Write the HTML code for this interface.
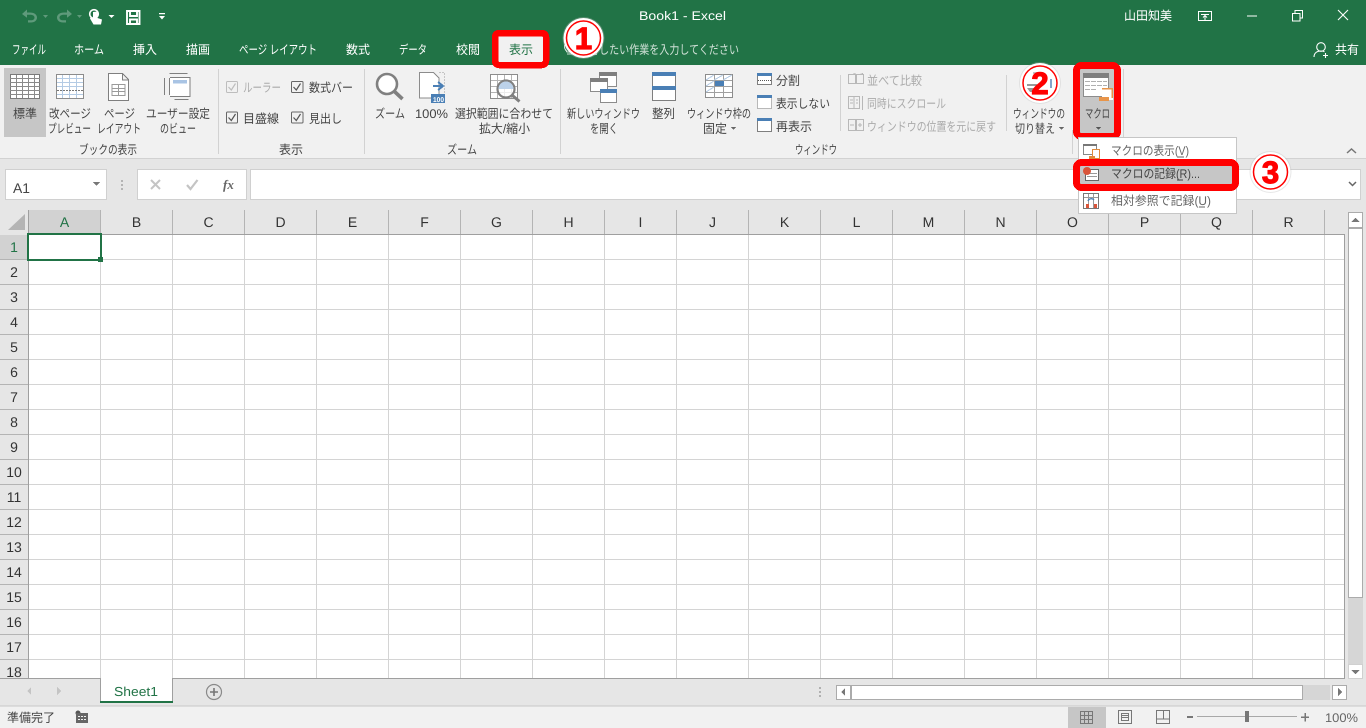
<!DOCTYPE html>
<html lang="ja"><head><meta charset="utf-8"><title>Book1 - Excel</title>
<style>
html,body{margin:0;padding:0;width:1366px;height:728px;overflow:hidden;background:#fff}
svg{display:block}
text{font-family:"Liberation Sans","Noto Sans CJK JP",sans-serif;font-size:12.5px;fill:#444;}
.w{fill:#fff}.g{fill:#ababab}
.h{font-size:14px;fill:#333;text-anchor:middle}
.n{font-size:14px;fill:#333;text-anchor:middle}
.c{font-family:"Liberation Sans",sans-serif;font-weight:bold;font-size:31px;fill:#f00;text-anchor:middle;stroke:#f00;stroke-width:1.2px}
</style></head><body>
<svg width="1366" height="728" viewBox="0 0 1366 728" xmlns="http://www.w3.org/2000/svg" shape-rendering="crispEdges" text-rendering="geometricPrecision">
<!-- chrome backgrounds -->
<rect width="1366" height="65" fill="#217346"/>
<rect y="65" width="1366" height="93" fill="#f1f1f1"/>
<rect y="158" width="1366" height="52" fill="#e6e6e6"/>
<rect y="158" width="1366" height="1" fill="#d2d2d2"/>
<!-- title -->
<text class="w" x="639" y="20" textLength="87" lengthAdjust="spacingAndGlyphs">Book1  -  Excel</text>
<text class="w" x="1124" y="20" textLength="48" lengthAdjust="spacingAndGlyphs">山田知美</text>
<g shape-rendering="geometricPrecision">
<!-- QAT -->
<path d="M22 14l5-4.500v3h3c4 0 7 2 7 5s-2.500 5-6 5h-3v-2.200h3c2.300 0 3.500-1.200 3.500-2.800s-1.500-2.800-4.500-2.800h-3v3z" fill="#5f9a7b"/>
<path d="M43 15h5l-2.500 3z" fill="#5f9a7b"/>
<path d="M72 14l-5-4.500v3h-3c-4 0-7 2-7 5s2.500 5 6 5h3v-2.200h-3c-2.300 0-3.500-1.200-3.500-2.800s1.500-2.800 4.500-2.800h3v3z" fill="#5f9a7b"/>
<path d="M77 15h5l-2.500 3z" fill="#5f9a7b"/>
<path d="M93 12v6l-2.500-.5-.5 1 3.500 6h7.500l1-5-4.500-1.500v-6.500z" fill="#fff"/>
<circle cx="94" cy="14" r="4.300" fill="none" stroke="#fff" stroke-width="1.600"/>
<path d="M108.500 15h6l-3 3z" fill="#fff"/>
<path d="M127 11h12.500v13h-12.500z M130 11v5h7v-5 M130 24v-4.500h7v4.500" fill="none" stroke="#fff" stroke-width="1.900"/>
<path d="M159 13h6v1.200h-6z M159 16h6l-3 3.500z" fill="#fff"/>
<!-- window controls -->
<path d="M1198.500 11.500h13v9h-13z M1201 14.500h8 M1205 20v-4 M1203 17.500l2-2 2 2" fill="none" stroke="#fff"/>
<path d="M1247 16h10" stroke="#fff" fill="none"/>
<path d="M1292.500 13.500h7.500v7.500h-7.500z M1295 13v-2.500h7.500v7.500h-2.500" fill="none" stroke="#fff"/>
<path d="M1338 10l10 10M1348 10l-10 10" stroke="#fff" stroke-width="1.100" fill="none"/>
<!-- share person -->
<circle cx="1321" cy="47" r="4.300" fill="none" stroke="#fff" stroke-width="1.100"/>
<path d="M1314 57c0-4 3-6 7-6 1.500 0 2.500.3 3.500.8M1325.500 53v5M1323 55.500h5" fill="none" stroke="#fff" stroke-width="1.100"/>
</g>
<!-- tabs -->
<text class="w" x="12" y="54" textLength="34" lengthAdjust="spacingAndGlyphs">ファイル</text>
<text class="w" x="74" y="54" textLength="30" lengthAdjust="spacingAndGlyphs">ホーム</text>
<text class="w" x="133" y="54" textLength="24" lengthAdjust="spacingAndGlyphs">挿入</text>
<text class="w" x="186" y="54" textLength="24" lengthAdjust="spacingAndGlyphs">描画</text>
<text class="w" x="239" y="54" textLength="78" lengthAdjust="spacingAndGlyphs">ページ レイアウト</text>
<text class="w" x="346" y="54" textLength="24" lengthAdjust="spacingAndGlyphs">数式</text>
<text class="w" x="399" y="54" textLength="28" lengthAdjust="spacingAndGlyphs">データ</text>
<text class="w" x="456" y="54" textLength="24" lengthAdjust="spacingAndGlyphs">校閲</text>
<text style="fill:#cfe0d6" x="579" y="54" textLength="160" lengthAdjust="spacingAndGlyphs">実行したい作業を入力してください</text>
<path d="M565 49a5 5 0 1 1 9 0l-2 3h-5zM567 54h5" fill="none" stroke="#cfe0d6"/>
<text class="w" x="1335" y="54" textLength="24" lengthAdjust="spacingAndGlyphs">共有</text>
<!-- active tab -->
<rect x="497" y="35" width="47" height="30" fill="#f1f1f1"/>
<rect x="495" y="33" width="51" height="32" rx="4" fill="none" stroke="#f00" stroke-width="6.500"/>
<text style="fill:#217346" x="509" y="54" textLength="24" lengthAdjust="spacingAndGlyphs">表示</text>
<!-- ribbon separators -->
<path d="M218.500 69v85M364.500 69v85M560.500 69v85M840.500 75v56M1006.500 75v56M1072.500 130v24M1123.500 69v85" stroke="#d2d2d2" fill="none"/>
<!-- ribbon buttons -->
<rect x="4" y="68" width="42" height="69" fill="#c6c6c6"/>
<!-- 標準 icon -->
<g fill="none">
<rect x="10.500" y="74.500" width="29" height="24" fill="#fff" stroke="#7a7a7a"/>
<path d="M10 78.500h30M10 82.500h30M10 86.500h30M10 90.500h30M10 94.500h30M16.500 75v23M22.500 75v23M28.500 75v23M34.500 75v23" stroke="#8a8a8a"/>
<!-- 改ページ -->
<rect x="56.500" y="74.500" width="27" height="24" fill="#fff" stroke="#8c8c8c"/>
<path d="M57 78.500h26M57 82.500h26M57 86.500h26M57 94.500h26M62.500 75v23M69.500 75v23M76.500 75v23" stroke="#b4cbe4"/>
<path d="M57 90.500h26" stroke="#777" stroke-dasharray="2 1"/>
<!-- ページ -->
<path d="M108.500 73.500h14l6 6v21h-20z M122.500 74v6h6" fill="#fff" stroke="#7f7f7f"/>
<path d="M112 84.500h13v11h-13z M112 88.500h13M112 91.500h13M118.500 84v11" stroke="#9a9a9a"/>
<!-- ユーザー設定 -->
<path d="M169.500 73.500h18M174.500 99.500h14M164.500 78v17M169.500 78v17" stroke="#7f7f7f"/>
<path d="M170 77.500h20v19h-20" fill="#fff" stroke="#7f7f7f"/>
<rect x="173" y="80" width="14" height="3.500" fill="#a9c4e4"/>
<!-- 100% -->
<path d="M419.500 72.500h14l5.500 5.500v20h-19.500z" fill="#fff" stroke="#8c8c8c"/>
<path d="M439.500 72.500h5v20" stroke="#999" stroke-dasharray="1 2"/>
<path d="M433 86h9M438 82l5 4-5 4" stroke="#4a7fb5" stroke-width="2"/>
<rect x="431" y="94" width="14" height="9" fill="#4a7fb5"/>
<!-- 選択範囲 -->
<rect x="490.500" y="74.500" width="27" height="24" fill="#fff" stroke="#8c8c8c"/>
<path d="M491 80.500h26M491 86.500h26M491 92.500h26M497.500 75v23M504.500 75v23M511.500 75v23" stroke="#b4b4b4"/>
<!-- new window -->
<rect x="599.500" y="72.500" width="17" height="14" fill="#fff" stroke="#8c8c8c"/><rect x="599" y="72" width="18" height="4" fill="#7f7f7f"/>
<rect x="590.500" y="78.500" width="17" height="13" fill="#fff" stroke="#8c8c8c"/><rect x="590" y="78" width="18" height="4" fill="#7f7f7f"/>
<rect x="600.500" y="89.500" width="16" height="13" fill="#fff" stroke="#8c8c8c"/><rect x="600" y="89" width="17" height="4" fill="#4a7fb5"/>
<!-- 整列 -->
<rect x="652.500" y="72.500" width="23" height="28" fill="#fff" stroke="#7f7f7f"/>
<rect x="652" y="72" width="24" height="4" fill="#4a7fb5"/><rect x="652" y="86" width="24" height="4" fill="#4a7fb5"/>
<!-- 枠の固定 -->
<rect x="705.500" y="74.500" width="27" height="23" fill="#fff" stroke="#8c8c8c"/>
<path d="M706 80.500h26M706 86.500h26M706 92.500h26M714.500 75v23M723.500 75v23" stroke="#a0a0a0"/>
<path d="M706 80l8-5M706 86l8-5M706 92l8-5M714 80l9-5M723 80l9-5" stroke="#b4cbe4"/>
<rect x="715" y="81" width="9" height="5" fill="#4a7fb5"/>
<!-- 分割 etc -->
<rect x="757.500" y="73.500" width="14" height="11" fill="#fff" stroke="#7f7f7f"/><rect x="757" y="73" width="15" height="3" fill="#4a7fb5"/>
<path d="M758 80.500h14" stroke="#555" stroke-dasharray="1 1"/>
<rect x="757.500" y="95.500" width="14" height="13" fill="#fff" stroke="#777" stroke-dasharray="1 1"/><rect x="757" y="95" width="15" height="3" fill="#4a7fb5"/>
<rect x="757.500" y="118.500" width="14" height="13" fill="#fff" stroke="#7f7f7f"/><rect x="757" y="118" width="15" height="3" fill="#4a7fb5"/>
<!-- disabled -->
<path d="M848.500 74.500h7v9h-7zM856.500 74.500h7v9h-7zM852.500 74.500l3-1M860 74.500l3-1" stroke="#b8b8b8"/>
<path d="M848.500 96.500h11v12h-11zM854 97v11M850 100h3M850 103h3M856 100h2M856 103h2M862.500 96v14" stroke="#b8b8b8"/>
<path d="M848.500 119.500h7v11h-7zM856.500 119.500h7v11h-7zM850 125h4M858 125h4M860 123v4" stroke="#b8b8b8"/>
</g>
<g shape-rendering="geometricPrecision" fill="none">
<!-- magnifiers -->
<circle cx="387" cy="84" r="10" fill="#fff" stroke="#808080" stroke-width="2.600"/>
<path d="M394.500 91.500l8 7.500" stroke="#808080" stroke-width="3.600"/>
<circle cx="506" cy="89" r="8.500" fill="#fff" fill-opacity=".75" stroke="#808080" stroke-width="2.200"/>
<path d="M498.500 89a7.500 7.500 0 0 1 15 0z" fill="#bcd2ea"/>
<path d="M512.500 95.500l7 6" stroke="#808080" stroke-width="3"/>
<!-- checks -->
<rect x="226.500" y="81.500" width="11" height="11" rx="1" stroke="#bdbdbd"/>
<path d="M228.500 87l2.800 3 4.200-6.500" stroke="#bdbdbd" stroke-width="1.200"/>
<rect x="291.500" y="81.500" width="11.500" height="11" rx="1" stroke="#666"/>
<path d="M293.500 87l2.800 3 4.200-6.500" stroke="#555" stroke-width="1.200"/>
<rect x="226.500" y="112" width="11" height="11" rx="1" stroke="#666"/>
<path d="M228.500 117.500l2.800 3 4.200-6.500" stroke="#555" stroke-width="1.200"/>
<rect x="291.500" y="112" width="11.500" height="11" rx="1" stroke="#666"/>
<path d="M293.500 117.500l2.800 3 4.200-6.500" stroke="#555" stroke-width="1.200"/>
</g>
<text x="433" y="102" textLength="11" lengthAdjust="spacingAndGlyphs" style="font-size:7px;font-weight:bold;fill:#fff">100</text>
<!-- ribbon text -->
<text x="13" y="118" textLength="24" lengthAdjust="spacingAndGlyphs">標準</text>
<text x="49" y="118" textLength="42" lengthAdjust="spacingAndGlyphs">改ページ</text>
<text x="48" y="133" textLength="43" lengthAdjust="spacingAndGlyphs">プレビュー</text>
<text x="104" y="118" textLength="31" lengthAdjust="spacingAndGlyphs">ページ</text>
<text x="97" y="133" textLength="44" lengthAdjust="spacingAndGlyphs">レイアウト</text>
<text x="146" y="118" textLength="64" lengthAdjust="spacingAndGlyphs">ユーザー設定</text>
<text x="160" y="133" textLength="36" lengthAdjust="spacingAndGlyphs">のビュー</text>
<text x="79" y="154" textLength="58" lengthAdjust="spacingAndGlyphs">ブックの表示</text>
<text class="g" x="243" y="92" textLength="38" lengthAdjust="spacingAndGlyphs">ルーラー</text>
<text x="309" y="92" textLength="44" lengthAdjust="spacingAndGlyphs">数式バー</text>
<text x="243" y="123" textLength="36" lengthAdjust="spacingAndGlyphs">目盛線</text>
<text x="309" y="123" textLength="33" lengthAdjust="spacingAndGlyphs">見出し</text>
<text x="279" y="154" textLength="24" lengthAdjust="spacingAndGlyphs">表示</text>
<text x="375" y="118" textLength="30" lengthAdjust="spacingAndGlyphs">ズーム</text>
<text x="415" y="118" textLength="33" lengthAdjust="spacingAndGlyphs">100%</text>
<text x="455" y="118" textLength="98" lengthAdjust="spacingAndGlyphs">選択範囲に合わせて</text>
<text x="479" y="133" textLength="51" lengthAdjust="spacingAndGlyphs">拡大/縮小</text>
<text x="447" y="154" textLength="30" lengthAdjust="spacingAndGlyphs">ズーム</text>
<text x="567" y="118" textLength="73" lengthAdjust="spacingAndGlyphs">新しいウィンドウ</text>
<text x="590" y="133" textLength="28" lengthAdjust="spacingAndGlyphs">を開く</text>
<text x="652" y="118" textLength="23" lengthAdjust="spacingAndGlyphs">整列</text>
<text x="687" y="118" textLength="64" lengthAdjust="spacingAndGlyphs">ウィンドウ枠の</text>
<text x="703" y="133" textLength="24" lengthAdjust="spacingAndGlyphs">固定</text>
<path d="M731 127h5l-2.500 3z" fill="#666"/>
<text x="776" y="85" textLength="24" lengthAdjust="spacingAndGlyphs">分割</text>
<text x="776" y="108" textLength="54" lengthAdjust="spacingAndGlyphs">表示しない</text>
<text x="776" y="131" textLength="36" lengthAdjust="spacingAndGlyphs">再表示</text>
<text class="g" x="867" y="85" textLength="55" lengthAdjust="spacingAndGlyphs">並べて比較</text>
<text class="g" x="867" y="108" textLength="79" lengthAdjust="spacingAndGlyphs">同時にスクロール</text>
<text class="g" x="867" y="131" textLength="129" lengthAdjust="spacingAndGlyphs">ウィンドウの位置を元に戻す</text>
<text x="795" y="154" textLength="42" lengthAdjust="spacingAndGlyphs">ウィンドウ</text>
<text x="1013" y="118" textLength="52" lengthAdjust="spacingAndGlyphs">ウィンドウの</text>
<text x="1015" y="133" textLength="40" lengthAdjust="spacingAndGlyphs">切り替え</text>
<path d="M1059 127h5l-2.500 3z" fill="#666"/>
<!-- collapse chevron -->
<path d="M1347 153l4.500-4 4.500 4" fill="none" stroke="#777" stroke-width="1.500" shape-rendering="geometricPrecision"/>
<!-- macro button -->
<rect x="1080" y="69" width="34" height="64" fill="#c6c6c6"/>
<rect x="1083.500" y="73.500" width="25" height="23" fill="#fff" stroke="#8c8c8c"/>
<rect x="1083" y="73" width="26" height="5" fill="#7f7f7f"/>
<path d="M1085 81.500h22M1085 85.500h22M1085 89.500h12" stroke="#b0b0b0" stroke-dasharray="5 1"/>
<rect x="1102" y="88" width="11" height="12" fill="#fff"/>
<path d="M1102 88h11v1.500h-11z M1111.500 88h1.500v10h-1.500z" fill="#e8954a"/>
<rect x="1099" y="97" width="10" height="4" fill="#e8954a"/>
<text x="1085" y="118" textLength="25" lengthAdjust="spacingAndGlyphs">マクロ</text>
<path d="M1096 127h5l-2.500 3z" fill="#555"/>
<rect x="1076.500" y="65.500" width="41" height="71" rx="5" fill="none" stroke="#f00" stroke-width="7"/>
<!-- formula bar -->
<rect x="5.500" y="169.500" width="101" height="30" fill="#fff" stroke="#d0d0d0"/>
<text x="13" y="193" style="font-size:14px" textLength="17" lengthAdjust="spacingAndGlyphs">A1</text>
<path d="M93 182h7l-3.500 4z" fill="#777"/>
<path d="M121 180h2v2h-2zM121 184h2v2h-2zM121 188h2v2h-2z" fill="#b4b4b4"/>
<rect x="137.500" y="169.500" width="109" height="30" fill="#fff" stroke="#d0d0d0"/>
<path d="M151 180l9 9M160 180l-9 9" stroke="#c4c4c4" stroke-width="2" fill="none" shape-rendering="geometricPrecision"/>
<path d="M187 185l3.500 4 7-9" stroke="#c4c4c4" stroke-width="2.200" fill="none" shape-rendering="geometricPrecision"/>
<text x="223" y="189" style="font-family:'Liberation Serif',serif;font-style:italic;font-weight:bold;font-size:13px;fill:#666">fx</text>
<rect x="250.500" y="169.500" width="1110" height="30" fill="#fff" stroke="#d0d0d0"/>
<path d="M1349 182l3.500 3.500 3.500-3.500" fill="none" stroke="#666" stroke-width="1.500" shape-rendering="geometricPrecision"/>
<!-- sheet -->
<rect y="210" width="1345" height="25" fill="#e6e6e6"/>
<rect y="235" width="28" height="443" fill="#e6e6e6"/>
<rect x="1345" y="210" width="21" height="496" fill="#e6e6e6"/>
<rect x="28" y="235" width="1316" height="443" fill="#fff"/>
<path d="M8 230L25 214V230Z" fill="#b4b4b4" shape-rendering="geometricPrecision"/>
<rect x="28" y="210" width="72" height="24" fill="#d2d2d2"/>
<rect y="235" width="28" height="25" fill="#d2d2d2"/>
<!-- grid -->
<path fill="none" stroke="#d4d4d4" d="M100.500 235V678M172.500 235V678M244.500 235V678M316.500 235V678M388.500 235V678M460.500 235V678M532.500 235V678M604.500 235V678M676.500 235V678M748.500 235V678M820.500 235V678M892.500 235V678M964.500 235V678M1036.500 235V678M1108.500 235V678M1180.500 235V678M1252.500 235V678M1324.500 235V678
M28 259.500H1344M28 284.500H1344M28 309.500H1344M28 334.500H1344M28 359.500H1344M28 384.500H1344M28 409.500H1344M28 434.500H1344M28 459.500H1344M28 484.500H1344M28 509.500H1344M28 534.500H1344M28 559.500H1344M28 584.500H1344M28 609.500H1344M28 634.500H1344M28 659.500H1344"/>
<path fill="none" stroke="#b4b4b4" d="M100.500 210V234M172.500 210V234M244.500 210V234M316.500 210V234M388.500 210V234M460.500 210V234M532.500 210V234M604.500 210V234M676.500 210V234M748.500 210V234M820.500 210V234M892.500 210V234M964.500 210V234M1036.500 210V234M1108.500 210V234M1180.500 210V234M1252.500 210V234M1324.500 210V234"/>
<path fill="none" stroke="#b4b4b4" d="M0 259.500H28M0 284.500H28M0 309.500H28M0 334.500H28M0 359.500H28M0 384.500H28M0 409.500H28M0 434.500H28M0 459.500H28M0 484.500H28M0 509.500H28M0 534.500H28M0 559.500H28M0 584.500H28M0 609.500H28M0 634.500H28M0 659.500H28"/>
<path fill="none" stroke="#9f9f9f" d="M28.500 210V678M28 234.500H1345M1344.500 234V678M0 678.500H1345"/>
<!-- headers -->
<text class="h" style="fill:#217346" x="64.500" y="227">A</text><text class="h" x="136.500" y="227">B</text><text class="h" x="208.500" y="227">C</text><text class="h" x="280.500" y="227">D</text><text class="h" x="352.500" y="227">E</text><text class="h" x="424.500" y="227">F</text><text class="h" x="496.500" y="227">G</text><text class="h" x="568.500" y="227">H</text><text class="h" x="640.500" y="227">I</text><text class="h" x="712.500" y="227">J</text><text class="h" x="784.500" y="227">K</text><text class="h" x="856.500" y="227">L</text><text class="h" x="928.500" y="227">M</text><text class="h" x="1000.500" y="227">N</text><text class="h" x="1072.500" y="227">O</text><text class="h" x="1144.500" y="227">P</text><text class="h" x="1216.500" y="227">Q</text><text class="h" x="1288.500" y="227">R</text>
<text class="n" style="fill:#217346" x="14" y="252">1</text><text class="n" x="14" y="277">2</text><text class="n" x="14" y="302">3</text><text class="n" x="14" y="327">4</text><text class="n" x="14" y="352">5</text><text class="n" x="14" y="377">6</text><text class="n" x="14" y="402">7</text><text class="n" x="14" y="427">8</text><text class="n" x="14" y="452">9</text><text class="n" x="14" y="477">10</text><text class="n" x="14" y="502">11</text><text class="n" x="14" y="527">12</text><text class="n" x="14" y="552">13</text><text class="n" x="14" y="577">14</text><text class="n" x="14" y="602">15</text><text class="n" x="14" y="627">16</text><text class="n" x="14" y="652">17</text><text class="n" x="14" y="677">18</text>
<!-- selection -->
<rect x="28" y="234" width="73" height="26" fill="#fff" stroke="#217346" stroke-width="2"/>
<rect x="98" y="257" width="5" height="5" fill="#217346"/>
<!-- vertical scrollbar -->
<rect x="1348" y="228" width="15" height="436" fill="#d6d6d6"/>
<rect x="1348.500" y="212.500" width="14" height="15" fill="#fff" stroke="#ababab"/>
<path d="M1351 222h9l-4.500-4z" fill="#777"/>
<rect x="1348.500" y="228.500" width="14" height="369" fill="#fff" stroke="#ababab"/>
<rect x="1348.500" y="664.500" width="14" height="14" fill="#fff" stroke="#d0d0d0"/>
<path d="M1351 670h9l-4.500 4z" fill="#777"/>
<!-- bottom -->
<rect y="679" width="1366" height="27" fill="#e6e6e6"/>
<rect y="706" width="1366" height="22" fill="#f1f1f1"/>
<rect y="705.500" width="1366" height="1" fill="#c8c8c8"/>
<rect x="100" y="678" width="73" height="24" fill="#fff"/>
<path d="M100.500 678v24M172.500 678v24" stroke="#9f9f9f" fill="none"/>
<rect x="100" y="701" width="73" height="2" fill="#217346"/>
<text style="font-size:13px;fill:#217346" x="114" y="696" textLength="44" lengthAdjust="spacingAndGlyphs">Sheet1</text>
<path d="M27 691l4-4v8zM57 687l4 4-4 4z" fill="#c4c4c4"/>
<g shape-rendering="geometricPrecision"><circle cx="214" cy="692" r="7.500" fill="none" stroke="#8a8a8a" stroke-width="1.200"/><path d="M210 692h8M214 688v8" stroke="#777" stroke-width="1.600"/></g>
<path d="M819 687h2v2h-2zM819 691h2v2h-2zM819 695h2v2h-2z" fill="#b0b0b0"/>
<rect x="836.500" y="685.500" width="14" height="14" fill="#fff" stroke="#ababab"/>
<path d="M845 688v8l-4-4z" fill="#777"/>
<rect x="851" y="685" width="479" height="15" fill="#d6d6d6"/>
<rect x="851.500" y="685.500" width="451" height="14" fill="#fff" stroke="#ababab"/>
<rect x="1332.500" y="685.500" width="14" height="14" fill="#fff" stroke="#ababab"/>
<path d="M1338 688v8l4-4z" fill="#777"/>
<!-- status -->
<text x="7" y="722" textLength="48" lengthAdjust="spacingAndGlyphs">準備完了</text>
<circle cx="78" cy="713" r="2.500" fill="#555" shape-rendering="geometricPrecision"/>
<path d="M76 713h12v10h-12z" fill="#666"/><path d="M78 716h2v1h-2zM81 716h2v1h-2zM84 716h2v1h-2zM78 719h2v1h-2zM81 719h2v1h-2zM84 719h2v1h-2z" fill="#f1f1f1"/>
<rect x="1068" y="707" width="38" height="21" fill="#c6c6c6"/>
<path fill="none" stroke="#777" d="M1080.500 711.500h12v12h-12zM1084.500 711v13M1088.500 711v13M1080 715.500h13M1080 719.500h13"/>
<path fill="none" stroke="#777" d="M1118.500 710.500h13v13h-13zM1121.500 713.500h7v7h-7zM1122 715.500h6M1122 717.500h6"/>
<path fill="none" stroke="#777" d="M1156.500 710.500h13v13h-13zM1163.500 711v8h-7M1163.500 719h6"/>
<rect x="1187" y="716" width="6" height="2" fill="#777"/>
<rect x="1197" y="716" width="100" height="1" fill="#a8a8a8"/>
<rect x="1245" y="711" width="4" height="11" fill="#777"/>
<path d="M1301 716.500h8v1.500h-8zM1304.300 713h1.500v8.500h-1.500z" fill="#777"/>
<text x="1325" y="722" textLength="33" lengthAdjust="spacingAndGlyphs" style="fill:#666">100%</text>
<!-- dropdown -->
<rect x="1078.500" y="137.500" width="158" height="76" fill="#fff" stroke="#c6c6c6"/>
<rect x="1083.500" y="144.500" width="13" height="10" fill="#fff" stroke="#888"/><rect x="1083" y="144" width="14" height="2" fill="#777"/>
<rect x="1092.500" y="149.500" width="7" height="9" fill="#fff" stroke="#e08a3c"/><rect x="1089" y="156" width="6" height="3" fill="#e08a3c"/>
<text style="fill:#666" x="1111" y="155" textLength="78" lengthAdjust="spacingAndGlyphs">マクロの表示(V)</text>
<path d="M1178 157h6" stroke="#666"/>
<rect x="1080" y="166" width="152" height="18" fill="#c6c6c6"/>
<rect x="1085.500" y="169.500" width="13" height="11" fill="#fff" stroke="#666"/>
<path d="M1087 173.500h10M1087 176.500h10" stroke="#999"/>
<circle cx="1087" cy="171" r="4" fill="#d9553a" shape-rendering="geometricPrecision"/>
<text x="1111" y="178" textLength="89" lengthAdjust="spacingAndGlyphs">マクロの記録(R)...</text>
<path d="M1177 180h6" stroke="#444"/>
<rect x="1083.500" y="193.500" width="15" height="15" fill="#fff" stroke="#777"/>
<path d="M1084 197.500h14M1088.500 194v14M1093.500 194v14" stroke="#999"/>
<rect x="1086" y="204" width="3" height="4" fill="#d9553a"/><rect x="1094" y="204" width="3" height="4" fill="#d9553a"/>
<path d="M1088 201a3.500 3.500 0 0 1 6-1" fill="none" stroke="#4a7fb5" stroke-width="1.300" shape-rendering="geometricPrecision"/>
<text style="fill:#666" x="1111" y="205" textLength="100" lengthAdjust="spacingAndGlyphs">相対参照で記録(U)</text>
<path d="M1199 207h6" stroke="#666"/>
<rect x="1076.500" y="162.500" width="159" height="25" rx="5" fill="none" stroke="#f00" stroke-width="7"/>
<!-- annotations -->
<g shape-rendering="geometricPrecision">
<circle cx="583.500" cy="38" r="21" fill="#bbb" fill-opacity=".35"/>
<circle cx="583.500" cy="38" r="20" fill="#fff"/>
<circle cx="583.500" cy="38" r="17" fill="#fff" stroke="#f00" stroke-width="1.500"/>
<text class="c" x="583.500" y="49">1</text>
<circle cx="1040" cy="83" r="21" fill="#bbb" fill-opacity=".3"/>
<circle cx="1040" cy="83" r="20" fill="#fff"/>
<circle cx="1040" cy="83" r="17" fill="#fff" stroke="#f00" stroke-width="1.500"/>
<path d="M1027 88h10l-3 4h-4z" fill="#999"/><path d="M1027 85h10" stroke="#777" stroke-width="1.500"/><path d="M1051 79v9" stroke="#5a86b8" stroke-width="1.500"/><path d="M1033 73l6 0" stroke="#c4c4c4" stroke-width="2"/>
<text class="c" x="1040" y="94">2</text>
<circle cx="1270.500" cy="172" r="21" fill="#bbb" fill-opacity=".35"/>
<circle cx="1270.500" cy="172" r="20" fill="#fff"/>
<circle cx="1270.500" cy="172" r="17" fill="#fff" stroke="#f00" stroke-width="1.500"/>
<text class="c" x="1270.500" y="183">3</text>
</g>
</svg>
</body></html>
